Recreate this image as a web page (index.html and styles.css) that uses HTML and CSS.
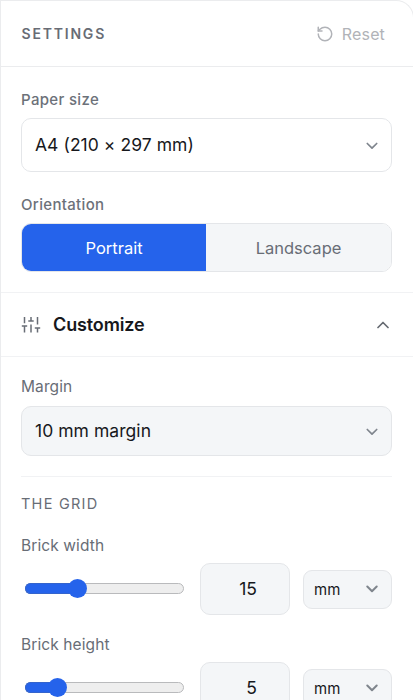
FILE: index.html
```
<!DOCTYPE html>
<html lang="en">
<head>
<meta charset="utf-8">
<title>Settings</title>
<link rel="stylesheet" href="styles.css">
</head>
<body>
<main class="panel">
  <header class="header">
    <h1 class="title">SETTINGS</h1>
    <button class="reset">
      <svg width="18" height="18" viewBox="0 0 24 24" fill="none" stroke="currentColor" stroke-width="2" stroke-linecap="round" stroke-linejoin="round"><path d="M3 12a9 9 0 1 0 9-9 9.75 9.75 0 0 0-6.74 2.74L3 8"/><path d="M3 3v5h5"/></svg>
      <span>Reset</span>
    </button>
  </header>
  <section class="paper">
    <div class="label label-medium">Paper size</div>
    <div class="select select-paper"><span>A4 (210 × 297 mm)</span><svg class="chevron" viewBox="0 0 12 8"><path d="M1.3 1.5 6 6.2l4.7-4.7"/></svg></div>
    <div class="label label-medium">Orientation</div>
    <div class="toggle">
      <button class="option option-active">Portrait</button>
      <button class="option">Landscape</button>
    </div>
  </section>
  <section class="customize">
    <svg class="sliders" width="20" height="20" viewBox="0 0 20 20"><path d="M3.5 2v6.2M10 2v4M16.5 2v7.5M3.5 11v6.5M10 9.5v8M16.5 13v4.5M.8 11h5.4M7.3 6h5.4M13.8 13h5.4"/></svg>
    <h2 class="customize-title">Customize</h2>
    <svg class="chevron" viewBox="0 0 12 8"><path d="M1 6.5 6 1.5l5 5"/></svg>
  </section>
  <section class="details">
    <div class="label">Margin</div>
    <div class="select select-margin"><span>10 mm margin</span><svg class="chevron" viewBox="0 0 12 8"><path d="M1.3 1.5 6 6.2l4.7-4.7"/></svg></div>
    <div class="grid-group">
      <h3 class="group-title">THE GRID</h3>
      <div class="field">
        <div class="label">Brick width</div>
        <div class="controls">
          <div class="range"><div class="fill fill-width"></div><div class="thumb"></div></div>
          <div class="number">15</div>
          <div class="unit"><span>mm</span><svg class="chevron" viewBox="0 0 12 8"><path d="M1.3 1.5 6 6.2l4.7-4.7"/></svg></div>
        </div>
      </div>
      <div class="field">
        <div class="label">Brick height</div>
        <div class="controls">
          <div class="range"><div class="fill fill-height"></div><div class="thumb"></div></div>
          <div class="number">5</div>
          <div class="unit"><span>mm</span><svg class="chevron" viewBox="0 0 12 8"><path d="M1.3 1.5 6 6.2l4.7-4.7"/></svg></div>
        </div>
      </div>
    </div>
  </section>
</main>
</body>
</html>
```
FILE: styles.css
```
* { box-sizing: border-box; }
html, body { height: 100%; overflow: hidden; }
body {
  margin: 0;
  background: #fff;
  color: #17181c;
  font-family: Inter, "Liberation Sans", sans-serif;
  font-size: 17.5px;
}
h1, h2, h3 { margin: 0; }
button { padding: 0; border: 0; background: none; font: inherit; }
svg { flex: none; }
.panel {
  width: calc(100% + 1px);
  height: 100vh;
  overflow: hidden;
  border: 1px solid #ebecee;
  border-bottom: 0;
  border-radius: 0 18px 0 0;
}
.header {
  display: flex;
  align-items: center;
  justify-content: space-between;
  height: 66px;
  padding: 0 28px 0 20.5px;
  border-bottom: 1px solid #ebecee;
}
.title { color: #686c75; font-size: 14px; font-weight: 600; letter-spacing: 1.8px; }
.reset { display: flex; align-items: center; gap: 8px; color: #b1b3b8; font-size: 16px; letter-spacing: .15px; }
.paper { height: 226px; padding: 23px 21px 0 20px; border-bottom: 1px solid #f1f2f4; }
.label { height: 20px; color: #686d76; font-size: 15.5px; line-height: 20px; letter-spacing: .1px; }
.label-medium { font-weight: 500; font-size: 15px; letter-spacing: .33px; color: #6c7179; }
.select {
  display: flex;
  align-items: center;
  justify-content: space-between;
  padding: 0 13px;
  border: 1px solid #e4e6e9;
  border-radius: 10px;
}
.select span { margin-bottom: 2px; letter-spacing: .05px; }
.select-paper { height: 54px; margin: 8px 0 23px; }
.chevron {
  width: 12px;
  height: 8px;
  margin-top: 1px;
  fill: none;
  stroke: #7f858d;
  stroke-width: 1.7;
  stroke-linecap: round;
  stroke-linejoin: round;
}
.toggle {
  display: flex;
  height: 49px;
  margin-top: 8px;
  border: 1px solid #e4e6e9;
  border-radius: 10px;
  overflow: hidden;
}
.option { flex: 1; background: #f4f6f8; color: #686d76; font-size: 16.5px; }
.option-active { flex: 0 0 184px; background: #2563eb; color: #fff; }
.customize {
  display: flex;
  align-items: center;
  height: 64px;
  padding: 0 24px 0 20px;
  border-bottom: 1px solid #f1f2f4;
}
.sliders { fill: none; stroke: #686d76; stroke-width: 1.5; }
.customize-title { flex: 1; margin-left: 12px; font-size: 18px; font-weight: 600; letter-spacing: -.13px; }
.customize .chevron { stroke: #666b72; }
.details { padding: 20px 21px 0 20px; }
.select-margin { height: 50px; margin-top: 9px; background: #f4f6f8; }
.grid-group { margin-top: 20px; padding-top: 17px; border-top: 1px solid #f1f2f4; }
.group-title { height: 20px; color: #686d76; font-size: 14.5px; font-weight: 400; line-height: 20px; letter-spacing: 1.25px; }
.field { height: 99px; padding-top: 22px; }
.controls { display: flex; align-items: center; height: 52px; margin-top: 7px; }
.range {
  display: flex;
  align-items: center;
  width: 159px;
  height: 11px;
  margin-bottom: 1px;
  margin-left: 4px;
  border: 1px solid #b9babc;
  border-radius: 6px;
  background: #eee;
}
.fill { flex: none; height: 11px; margin-left: -1px; margin-right: -8px; border: 1px solid #3464cc; border-right: 0; border-radius: 6px 0 0 6px; background: #2563eb; }
.fill-width { width: 51px; }
.fill-height { width: 31px; }
.thumb { flex: none; width: 19px; height: 19px; border-radius: 50%; background: #2563eb; }
.number {
  width: 90px;
  height: 52px;
  margin-left: 16px;
  padding-right: 32px;
  border: 1px solid #e4e6e9;
  border-radius: 10px;
  background: #f4f6f8;
  line-height: 50px;
  text-align: right;
}
.unit {
  display: flex;
  align-items: center;
  justify-content: space-between;
  width: 89px;
  height: 39px;
  margin-left: 13px;
  padding: 0 13px 0 10px;
  border: 1px solid #e4e6e9;
  border-radius: 9px;
  background: #f4f6f8;
  font-size: 15px;
}
.unit .chevron { margin-top: -1px; stroke-width: 2; }
```
